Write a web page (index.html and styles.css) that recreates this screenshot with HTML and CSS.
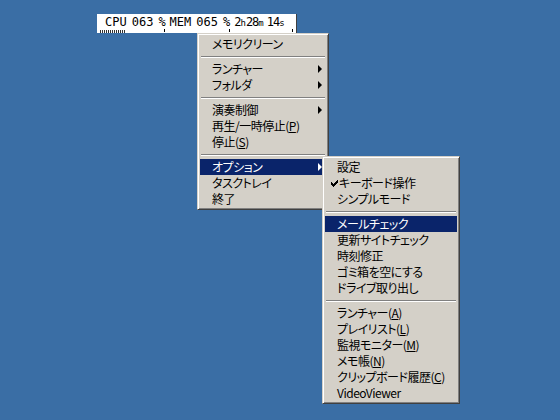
FILE: index.html
```html
<!DOCTYPE html>
<html lang="ja">
<head>
    <meta charset="UTF-8">
    <title>Tray Menu</title>
    <link rel="stylesheet" href="styles.css">
</head>
<body>
    <div class="desktop">
        <div class="meter">
            <div class="meter-text">
                <span>CPU</span>
                <span>063</span>
                <span class="pct">%</span>
                <span>MEM</span>
                <span>065</span>
                <span class="pct">%</span>
                <span class="uptime">2<small>h</small>28<small>m</small><span class="sec">14</span><small>s</small></span>
            </div>
            <div class="meter-scale">
                <div class="level"></div>
                <div class="tick t1"></div>
                <div class="tick t2"></div>
                <div class="tick t3"></div>
            </div>
        </div>

        <!-- main popup -->
        <div class="menu main-menu">
            <div class="item">メモリクリーン</div>
            <div class="sep"></div>
            <div class="item">ランチャー<span class="arrow"></span></div>
            <div class="item">フォルダ<span class="arrow"></span></div>
            <div class="sep"></div>
            <div class="item">演奏制御<span class="arrow"></span></div>
            <div class="item">再生/一時停止(<u>P</u>)</div>
            <div class="item">停止(<u>S</u>)</div>
            <div class="sep"></div>
            <div class="item active">オプション<span class="arrow"></span></div>
            <div class="item">タスクトレイ</div>
            <div class="item">終了</div>
        </div>

        <!-- options submenu -->
        <div class="menu sub-menu">
            <div class="item">設定</div>
            <div class="item checked">
                <svg class="check" width="7" height="7" viewBox="0 0 7 7"><path d="M0 2h1v1h1v1h1v-1h1v-1h1v-1h1v-1h1v3h-1v1h-1v1h-1v1h-1v1h-1v-1h-1v-1h-1z" fill="#000"/></svg>キーボード操作
            </div>
            <div class="item">シンプルモード</div>
            <div class="sep"></div>
            <div class="item active">メールチェック</div>
            <div class="item">更新サイトチェック</div>
            <div class="item">時刻修正</div>
            <div class="item">ゴミ箱を空にする</div>
            <div class="item">ドライブ取り出し</div>
            <div class="sep"></div>
            <div class="item">ランチャー(<u>A</u>)</div>
            <div class="item">プレイリスト(<u>L</u>)</div>
            <div class="item">監視モニター(<u>M</u>)</div>
            <div class="item">メモ帳(<u>N</u>)</div>
            <div class="item">クリップボード履歴(<u>C</u>)</div>
            <div class="item">VideoViewer</div>
        </div>
    </div>
</body>
</html>
```
FILE: styles.css
```css
html, body {
    margin: 0;
    padding: 0;
}
body {
    background: #3a6ea5;
    width: 560px;
    height: 420px;
    overflow: hidden;
}
.desktop {
    position: relative;
    width: 560px;
    height: 420px;
    padding-top: 14px;
    box-sizing: border-box;
}

/* status meter */
.meter {
    margin-left: 97px;
    width: 200px;
    height: 19px;
    background: #fff;
    border-right: 1px solid #404040;
    box-sizing: border-box;
    display: flex;
    flex-direction: column;
}
.meter-text {
    display: flex;
    gap: 5px;
    height: 15px;
    padding-left: 8px;
    font-family: "DejaVu Sans Mono", monospace;
    font-size: 12px;
    line-height: 16px;
    color: #000;
    white-space: pre;
}
.meter-text .pct {
    margin-right: -1px;
}
.meter-text .uptime {
    letter-spacing: -1px;
}
.meter-text small {
    font-size: 9px;
    letter-spacing: 0;
}
.meter-text .sec {
    margin-left: 3px;
}
.meter-scale {
    display: flex;
    height: 4px;
    padding-left: 3px;
}
.level {
    width: 26px;
    height: 3px;
    align-self: flex-end;
    background: repeating-linear-gradient(90deg, #303030 0 1px, #fff 1px 2px);
}
.tick {
    width: 1px;
    height: 3px;
    background: #000;
}
.t1 { margin-left: 38px; }
.t2 { margin-left: 64px; }
.t3 { margin-left: 62px; }

/* popup menus */
.menu {
    position: absolute;
    background: #d4d0c8;
    border: 1px solid;
    border-color: #d4d0c8 #404040 #404040 #d4d0c8;
    box-shadow: inset 1px 1px #fff, inset -1px -1px #808080;
    padding: 2px;
    box-sizing: border-box;
    font-family: "Noto Sans CJK JP", "Noto Sans", sans-serif;
    font-feature-settings: "palt";
    font-size: 12px;
    letter-spacing: -0.5px;
    color: #000;
}
.main-menu {
    left: 197px;
    top: 33px;
    width: 132px;
}
.sub-menu {
    left: 322px;
    top: 156px;
    width: 138px;
}
.item {
    display: flex;
    align-items: center;
    height: 16px;
    line-height: 16px;
    padding-left: 12px;
    white-space: nowrap;
}
.item u {
    text-decoration-thickness: 1px;
    text-underline-offset: 1px;
}
.item.active {
    background: #0a246a;
    color: #fff;
}
.item.checked {
    padding-left: 6px;
}
.check {
    flex: none;
    margin-right: 1px;
}
.arrow {
    margin-left: auto;
    margin-right: 4px;
    width: 0;
    height: 0;
    border-top: 4px solid transparent;
    border-bottom: 4px solid transparent;
    border-left: 4px solid #000;
}
.item.active .arrow {
    border-left-color: #fff;
}
.sep {
    height: 9px;
    display: flex;
    flex-direction: column;
    justify-content: center;
    padding: 0 1px;
}
.sep::before {
    content: "";
    height: 1px;
    background: #808080;
    border-bottom: 1px solid #fff;
}
```
